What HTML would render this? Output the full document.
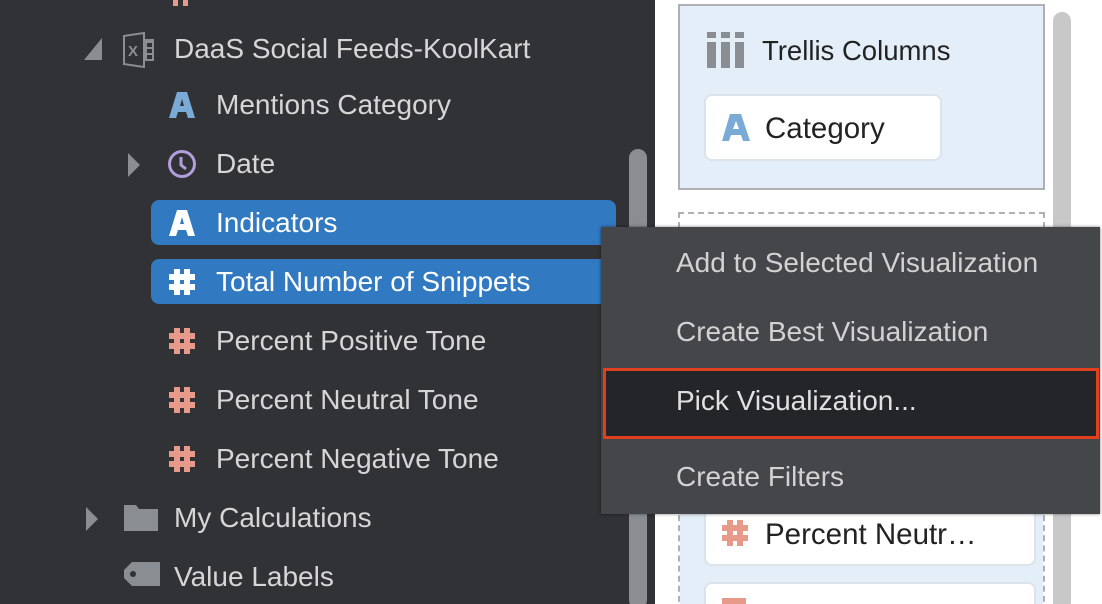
<!DOCTYPE html>
<html><head><meta charset="utf-8"><style>
*{margin:0;padding:0;box-sizing:border-box}
html,body{width:1102px;height:604px;overflow:hidden}
body{position:relative;background:#fff;font-family:"Liberation Sans",sans-serif}
.left{position:absolute;left:0;top:0;width:655px;height:604px;background:#313235}
.t{position:absolute;font-size:28px;color:#d6d6d6;line-height:30px;white-space:nowrap}
.sel{position:absolute;left:151px;width:465px;height:45px;background:#3179c1;border-radius:8px}
.ic{position:absolute}
.menu{position:absolute;left:601px;top:227px;width:499px;height:287px;background:#454649;box-shadow:0 0 3px rgba(0,0,0,.5)}
.mi{position:absolute;left:75px;font-size:28px;color:#d2d2d2;line-height:30px;white-space:nowrap}
</style></head><body>
<div class="left">
  <svg class="ic" style="left:170px;top:0" width="24" height="6"><rect x="3" y="0" width="5" height="6" fill="#e79a8a"/><rect x="13" y="0" width="5" height="6" fill="#e79a8a"/></svg>
  <svg class="ic" style="left:82px;top:36px" width="20" height="26"><polygon points="20,2 20,24 2,24" fill="#8a8d92"/></svg>
  <svg class="ic" style="left:122px;top:32px" width="34" height="36"><path d="M2 4 L22 1 V35 L2 32 Z" fill="none" stroke="#8a8d92" stroke-width="2"/><text x="6" y="24" font-size="15" font-weight="bold" fill="#8a8d92" font-family="Liberation Sans">X</text><rect x="22" y="7" width="10" height="22" fill="#8a8d92"/><rect x="25" y="11" width="5" height="4" fill="#313235"/><rect x="25" y="17" width="5" height="4" fill="#313235"/><rect x="25" y="23" width="5" height="4" fill="#313235"/></svg>
  <div class="t" style="left:174px;top:34px">DaaS Social Feeds-KoolKart</div>

  <svg class="ic" style="left:168px;top:91px" width="28" height="28"><path d="M9 1 H19 L27 27 H20 L18 21 H10 L8 27 H1 Z M12 15 H16 L14 8 Z" fill="#7aaad6" fill-rule="evenodd"/></svg>
  <div class="t" style="left:216px;top:90px">Mentions Category</div>

  <svg class="ic" style="left:126px;top:152px" width="16" height="26"><polygon points="2,1 14,13 2,25" fill="#8a8d92"/></svg>
  <svg class="ic" style="left:166px;top:148px" width="32" height="32"><circle cx="16" cy="16" r="12.5" fill="none" stroke="#b39ddb" stroke-width="3"/><path d="M15 9 V17 L20 21" fill="none" stroke="#b39ddb" stroke-width="3"/></svg>
  <div class="t" style="left:216px;top:149px">Date</div>

  <div class="sel" style="top:200px"></div>
  <svg class="ic" style="left:168px;top:209px" width="28" height="28"><path d="M9 1 H19 L27 27 H20 L18 21 H10 L8 27 H1 Z M12 15 H16 L14 8 Z" fill="#fff" fill-rule="evenodd"/></svg>
  <div class="t" style="left:216px;top:208px;color:#fff">Indicators</div>

  <div class="sel" style="top:259px"></div>
  <svg class="ic" style="left:168px;top:268px" width="28" height="28"><path d="M6 1h6v5h4V1h6v5h5v6h-5v4h5v6h-5v5h-6v-5h-4v5H6v-5H1v-6h5v-4H1V6h5z M12 12v4h4v-4z" fill="#fff" fill-rule="evenodd"/></svg>
  <div class="t" style="left:216px;top:267px;color:#fff">Total Number of Snippets</div>

  <svg class="ic" style="left:168px;top:327px" width="28" height="28"><path d="M6 1h6v5h4V1h6v5h5v6h-5v4h5v6h-5v5h-6v-5h-4v5H6v-5H1v-6h5v-4H1V6h5z M12 12v4h4v-4z" fill="#e79a8a" fill-rule="evenodd"/></svg>
  <div class="t" style="left:216px;top:326px">Percent Positive Tone</div>
  <svg class="ic" style="left:168px;top:386px" width="28" height="28"><path d="M6 1h6v5h4V1h6v5h5v6h-5v4h5v6h-5v5h-6v-5h-4v5H6v-5H1v-6h5v-4H1V6h5z M12 12v4h4v-4z" fill="#e79a8a" fill-rule="evenodd"/></svg>
  <div class="t" style="left:216px;top:385px">Percent Neutral Tone</div>
  <svg class="ic" style="left:168px;top:445px" width="28" height="28"><path d="M6 1h6v5h4V1h6v5h5v6h-5v4h5v6h-5v5h-6v-5h-4v5H6v-5H1v-6h5v-4H1V6h5z M12 12v4h4v-4z" fill="#e79a8a" fill-rule="evenodd"/></svg>
  <div class="t" style="left:216px;top:444px">Percent Negative Tone</div>

  <svg class="ic" style="left:84px;top:506px" width="16" height="26"><polygon points="2,1 14,13 2,25" fill="#8a8d92"/></svg>
  <svg class="ic" style="left:122px;top:503px" width="38" height="30"><path d="M2 2 H14 L17 6 H36 V28 H2 Z" fill="#8a8d92"/></svg>
  <div class="t" style="left:174px;top:503px">My Calculations</div>
  <svg class="ic" style="left:122px;top:560px" width="40" height="28"><path d="M10 2 H38 V26 H10 L2 18 V10 Z" fill="#8a8d92"/><circle cx="11" cy="14" r="3" fill="#313235"/></svg>
  <div class="t" style="left:174px;top:562px">Value Labels</div>

  <div style="position:absolute;left:629px;top:149px;width:18px;height:460px;border-radius:9px;background:#8a8d92"></div>
</div>

<div style="position:absolute;left:1053px;top:12px;width:18px;height:600px;border-radius:9px;background:#c8c8c8"></div>
<div style="position:absolute;left:678px;top:4px;width:367px;height:186px;background:#e3eef8;border:2px solid #b0b0b0"></div>
<svg class="ic" style="left:706px;top:31px" width="40" height="38"><rect x="1" y="1" width="9" height="6" fill="#8a8d92"/><rect x="15" y="1" width="9" height="6" fill="#8a8d92"/><rect x="29" y="1" width="9" height="6" fill="#8a8d92"/><rect x="1" y="11" width="9" height="26" fill="#8a8d92"/><rect x="15" y="11" width="9" height="26" fill="#8a8d92"/><rect x="29" y="11" width="9" height="26" fill="#8a8d92"/></svg>
<div class="t" style="left:762px;top:36px;color:#222;font-size:27.5px">Trellis Columns</div>
<div style="position:absolute;left:704px;top:94px;width:238px;height:67px;background:#fff;border:2px solid #dde3ea;border-radius:8px"></div>
<svg class="ic" style="left:721px;top:113px" width="30" height="30"><path d="M9 1 H20 L29 28 H22 L20 22 H10 L8 28 H1 Z M12 16 H18 L15 8 Z" fill="#7aaad6" fill-rule="evenodd"/></svg>
<div class="t" style="left:765px;top:114px;color:#222;font-size:29.5px">Category</div>
<div style="position:absolute;left:678px;top:212px;width:367px;height:400px;border:2px dashed #b0b0b0;border-bottom:none"></div>
<div style="position:absolute;left:680px;top:490px;width:363px;height:114px;background:#e3eef8"></div>
<div style="position:absolute;left:704px;top:505px;width:332px;height:61px;background:#fff;border:2px solid #dde3ea;border-radius:8px"></div>
<svg class="ic" style="left:721px;top:519px" width="30" height="30"><path d="M6 1h6v5h4V1h6v5h5v6h-5v4h5v6h-5v5h-6v-5h-4v5H6v-5H1v-6h5v-4H1V6h5z M12 12v4h4v-4z" fill="#e79a8a" fill-rule="evenodd"/></svg>
<div class="t" style="left:765px;top:520px;color:#222;font-size:29.5px">Percent Neutr…</div>
<div style="position:absolute;left:704px;top:582px;width:332px;height:40px;background:#fff;border:2px solid #dde3ea;border-radius:8px"></div>
<div style="position:absolute;left:722px;top:598px;width:24px;height:6px;background:#e79a8a"></div>

<div class="menu">
  <div class="mi" style="top:21px">Add to Selected Visualization</div>
  <div class="mi" style="top:90px">Create Best Visualization</div>
  <div style="position:absolute;left:2px;top:141px;width:496px;height:71px;background:#242528;border:3px solid #e0401e"></div>
  <div class="mi" style="top:159px;color:#e0e0e0">Pick Visualization...</div>
  <div class="mi" style="top:235px">Create Filters</div>
</div>
</body></html>
